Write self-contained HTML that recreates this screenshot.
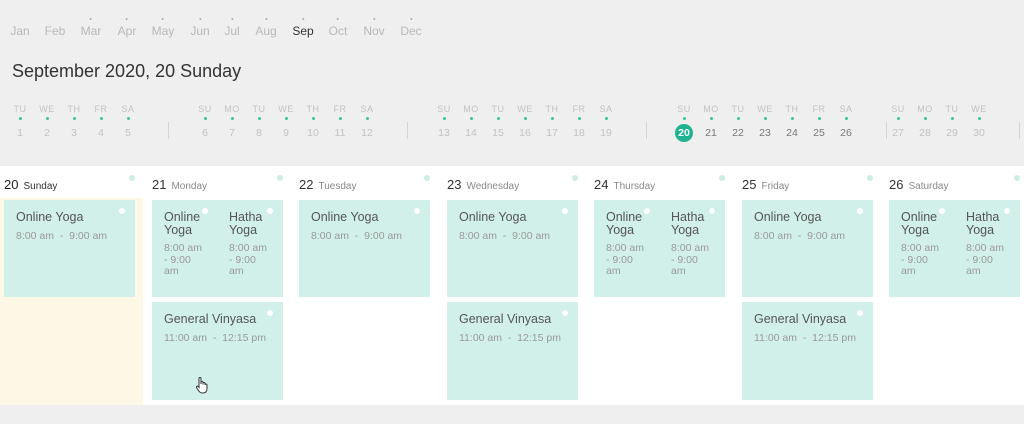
<!DOCTYPE html>
<html><head><meta charset="utf-8"><style>
*{margin:0;padding:0;box-sizing:border-box}
body{width:1024px;height:424px;background:#efefef;font-family:"Liberation Sans",sans-serif;position:relative;overflow:hidden}
.a{position:absolute}
.m{position:absolute;top:24px;font-size:12px;color:#b8b8b8;transform:translateX(-50%)}
.m i{position:absolute;left:50%;top:-6px;width:2px;height:2px;background:#aaa;border-radius:50%;margin-left:-1px}
.d{position:absolute;top:104px;width:24px;margin-left:-12px;text-align:center;color:#c2c2c2}
.d b{display:block;font-weight:normal;font-size:9px;letter-spacing:.5px;height:11px}
.d i{display:block;width:3px;height:3px;border-radius:50%;background:#3cc4a0;margin:2px auto 4px}
.d span{display:block;font-size:10.5px;height:18px;line-height:18px}
.d.k{color:#777}
.d.k b{color:#c2c2c2}
.d.s span{background:#1fb38f;color:#fff;border-radius:50%;width:18px;margin:0 auto;font-weight:bold}
.sep{position:absolute;top:122px;width:1px;height:17px;background:#d4d4d4}
.h{position:absolute;top:177px;font-size:13px;color:#333}
.h small{font-size:10px;color:#888;margin-left:5px}
.hd{position:absolute;top:175px;width:6px;height:6px;border-radius:50%;background:#cdeee6}
.c{position:absolute;width:131px;background:#d2f0ea;height:97px}
.c i{position:absolute;width:6px;height:6px;border-radius:50%;background:#fff;top:8px}
.t{position:absolute;left:12px;top:11px;font-size:12.5px;color:#555;line-height:13px}
.tm{position:absolute;left:12px;top:31px;font-size:10.5px;color:#999;line-height:11.5px}
</style></head><body>
<div class="m" style="left:20px">Jan</div>
<div class="m" style="left:55px">Feb</div>
<div class="m" style="left:91px"><i></i>Mar</div>
<div class="m" style="left:127px"><i></i>Apr</div>
<div class="m" style="left:163px"><i></i>May</div>
<div class="m" style="left:200px"><i></i>Jun</div>
<div class="m" style="left:232px"><i></i>Jul</div>
<div class="m" style="left:266px"><i></i>Aug</div>
<div class="m" style="left:303px;color:#333"><i></i>Sep</div>
<div class="m" style="left:338px"><i></i>Oct</div>
<div class="m" style="left:374px"><i></i>Nov</div>
<div class="m" style="left:411px"><i></i>Dec</div>
<div class="a" style="left:12px;top:61px;font-size:18px;color:#333">September 2020, 20 Sunday</div>

<div class="d" style="left:20px"><b>TU</b><i></i><span>1</span></div>
<div class="d" style="left:47px"><b>WE</b><i></i><span>2</span></div>
<div class="d" style="left:74px"><b>TH</b><i></i><span>3</span></div>
<div class="d" style="left:101px"><b>FR</b><i></i><span>4</span></div>
<div class="d" style="left:128px"><b>SA</b><i></i><span>5</span></div>
<div class="sep" style="left:168px"></div>
<div class="d" style="left:205px"><b>SU</b><i></i><span>6</span></div>
<div class="d" style="left:232px"><b>MO</b><i></i><span>7</span></div>
<div class="d" style="left:259px"><b>TU</b><i></i><span>8</span></div>
<div class="d" style="left:286px"><b>WE</b><i></i><span>9</span></div>
<div class="d" style="left:313px"><b>TH</b><i></i><span>10</span></div>
<div class="d" style="left:340px"><b>FR</b><i></i><span>11</span></div>
<div class="d" style="left:367px"><b>SA</b><i></i><span>12</span></div>
<div class="sep" style="left:407px"></div>
<div class="d" style="left:444px"><b>SU</b><i></i><span>13</span></div>
<div class="d" style="left:471px"><b>MO</b><i></i><span>14</span></div>
<div class="d" style="left:498px"><b>TU</b><i></i><span>15</span></div>
<div class="d" style="left:525px"><b>WE</b><i></i><span>16</span></div>
<div class="d" style="left:552px"><b>TH</b><i></i><span>17</span></div>
<div class="d" style="left:579px"><b>FR</b><i></i><span>18</span></div>
<div class="d" style="left:606px"><b>SA</b><i></i><span>19</span></div>
<div class="sep" style="left:646px"></div>
<div class="d k s" style="left:684px"><b>SU</b><i></i><span>20</span></div>
<div class="d k" style="left:711px"><b>MO</b><i></i><span>21</span></div>
<div class="d k" style="left:738px"><b>TU</b><i></i><span>22</span></div>
<div class="d k" style="left:765px"><b>WE</b><i></i><span>23</span></div>
<div class="d k" style="left:792px"><b>TH</b><i></i><span>24</span></div>
<div class="d k" style="left:819px"><b>FR</b><i></i><span>25</span></div>
<div class="d k" style="left:846px"><b>SA</b><i></i><span>26</span></div>
<div class="sep" style="left:886px"></div>
<div class="d" style="left:898px"><b>SU</b><i></i><span>27</span></div>
<div class="d" style="left:925px"><b>MO</b><i></i><span>28</span></div>
<div class="d" style="left:952px"><b>TU</b><i></i><span>29</span></div>
<div class="d" style="left:979px"><b>WE</b><i></i><span>30</span></div>
<div class="sep" style="left:1019px"></div>

<div class="a" style="left:0;top:166px;width:1024px;height:239px;background:#fff"></div>
<div class="a" style="left:0;top:198px;width:143px;height:207px;background:#fdf7e5"></div>

<div class="h" style="left:4px;color:#222">20<small style="color:#333">Sunday</small></div><div class="hd" style="left:129px"></div>
<div class="h" style="left:152px">21<small>Monday</small></div><div class="hd" style="left:277px"></div>
<div class="h" style="left:299px">22<small>Tuesday</small></div><div class="hd" style="left:424px"></div>
<div class="h" style="left:447px">23<small>Wednesday</small></div><div class="hd" style="left:572px"></div>
<div class="h" style="left:594px">24<small>Thursday</small></div><div class="hd" style="left:719px"></div>
<div class="h" style="left:742px">25<small>Friday</small></div><div class="hd" style="left:867px"></div>
<div class="h" style="left:889px">26<small>Saturday</small></div><div class="hd" style="left:1014px"></div>

<div class="c" style="left:4px;top:200px"><i style="left:115px"></i><div class="t">Online Yoga</div><div class="tm">8:00 am &nbsp;-&nbsp; 9:00 am</div></div>
<div class="c" style="left:299px;top:200px"><i style="left:115px"></i><div class="t">Online Yoga</div><div class="tm">8:00 am &nbsp;-&nbsp; 9:00 am</div></div>
<div class="c" style="left:447px;top:200px"><i style="left:115px"></i><div class="t">Online Yoga</div><div class="tm">8:00 am &nbsp;-&nbsp; 9:00 am</div></div>
<div class="c" style="left:742px;top:200px"><i style="left:115px"></i><div class="t">Online Yoga</div><div class="tm">8:00 am &nbsp;-&nbsp; 9:00 am</div></div>

<div class="c" style="left:152px;top:200px"><i style="left:50px"></i><i style="left:115px"></i><div class="t" style="width:40px">Online Yoga</div><div class="t" style="left:77px;width:40px">Hatha Yoga</div><div class="tm" style="top:43px;width:42px">8:00 am - 9:00 am</div><div class="tm" style="top:43px;left:77px;width:42px">8:00 am - 9:00 am</div></div>
<div class="c" style="left:594px;top:200px"><i style="left:50px"></i><i style="left:115px"></i><div class="t" style="width:40px">Online Yoga</div><div class="t" style="left:77px;width:40px">Hatha Yoga</div><div class="tm" style="top:43px;width:42px">8:00 am - 9:00 am</div><div class="tm" style="top:43px;left:77px;width:42px">8:00 am - 9:00 am</div></div>
<div class="c" style="left:889px;top:200px"><i style="left:50px"></i><i style="left:115px"></i><div class="t" style="width:40px">Online Yoga</div><div class="t" style="left:77px;width:40px">Hatha Yoga</div><div class="tm" style="top:43px;width:42px">8:00 am - 9:00 am</div><div class="tm" style="top:43px;left:77px;width:42px">8:00 am - 9:00 am</div></div>

<div class="c" style="left:152px;top:302px;height:98px"><i style="left:115px"></i><div class="t">General Vinyasa</div><div class="tm">11:00 am &nbsp;-&nbsp; 12:15 pm</div></div>
<div class="c" style="left:447px;top:302px;height:98px"><i style="left:115px"></i><div class="t">General Vinyasa</div><div class="tm">11:00 am &nbsp;-&nbsp; 12:15 pm</div></div>
<div class="c" style="left:742px;top:302px;height:98px"><i style="left:115px"></i><div class="t">General Vinyasa</div><div class="tm">11:00 am &nbsp;-&nbsp; 12:15 pm</div></div>
<svg class="a" style="left:195px;top:376px" width="14" height="18" viewBox="0 0 14 18"><path d="M4 9V2.5a1 1 0 0 1 2 0V8V6.5a1 1 0 0 1 2 0V8.5V7.5a1 1 0 0 1 2 0V9a1 1 0 0 1 2 0v4c0 2-1.5 4-3.5 4H7C5.5 17 4.5 16 3.5 14.5L1.5 11.5a1 1 0 0 1 1.7-1L4 11.5Z" fill="#fff" stroke="#333" stroke-width="1"/></svg>
</body></html>
